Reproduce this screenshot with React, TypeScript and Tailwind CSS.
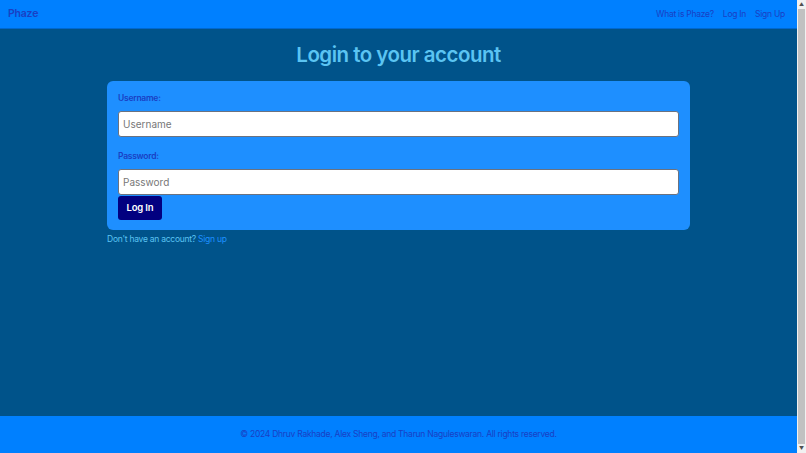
export default function App() {
  return (
    <div className="flex h-[453px] overflow-hidden font-['Inter',sans-serif]">
      <div className="flex-1 flex flex-col bg-[#00538a]">
        {/* header */}
        <header className="flex items-center justify-between h-[29px] pl-2 pr-[12px] bg-[#0080ff] border-b border-[#0068d0]">
          <span className="text-[10.5px] font-semibold text-[#1a3fc4] leading-[14px] tracking-[-0.02em]">Phaze</span>
          <nav className="flex items-center gap-[9px] text-[8.5px] text-[#1a3fc4] leading-[12px] tracking-[-0.03em]">
            <a>What is Phaze?</a>
            <a>Log In</a>
            <a>Sign Up</a>
          </nav>
        </header>

        {/* main */}
        <main className="flex-1 flex flex-col items-center">
          <h1 className="mt-[12px] text-[20.5px] leading-[28px] font-semibold text-[#5bc4f2] tracking-tight">
            Login to your account
          </h1>
          <div className="w-[583px] mt-[12px]">
            <form className="bg-[#1e8fff] rounded-[6px] px-[11px] pt-[11px] pb-[10px]">
              <label className="block text-[8.5px] leading-[12px] font-semibold tracking-[-0.03em] text-[#1a3fc4]">
                Username:
              </label>
              <input
                readOnly
                placeholder="Username"
                className="mt-[7px] block w-full h-[26px] rounded-[3px] bg-white border border-[#6b7280] px-[4px] text-[10px] placeholder:text-[#777]"
              />
              <label className="block mt-[13px] text-[8.5px] leading-[12px] font-semibold tracking-[-0.03em] text-[#1a3fc4]">
                Password:
              </label>
              <input
                readOnly
                placeholder="Password"
                className="mt-[7px] block w-full h-[26px] rounded-[3px] bg-white border border-[#6b7280] px-[4px] text-[10px] placeholder:text-[#777]"
              />
              <button
                type="button"
                className="mt-[1px] block h-[24px] w-[44px] rounded-[3px] bg-[#020080] text-white text-[9.5px] font-semibold tracking-[-0.02em]"
              >
                Log In
              </button>
            </form>
            <p className="mt-[3px] text-[8.5px] leading-[12px] tracking-[-0.03em] text-[#5bc4f2]">
              Don't have an account? <a className="text-[#1e90ff]">Sign up</a>
            </p>
          </div>
        </main>

        {/* footer */}
        <footer className="h-[37px] flex items-center justify-center bg-[#0080ff] text-[8.5px] tracking-[-0.03em] text-[#1a3fc4]">
          © 2024 Dhruv Rakhade, Alex Sheng, and Tharun Naguleswaran. All rights reserved.
        </footer>
      </div>

      {/* browser scrollbar */}
      <div className="w-[9px] flex flex-col bg-[#f1f1f1]">
        <div className="h-[9px] flex items-center justify-center text-[5px] leading-none text-[#505050]">▲</div>
        <div className="flex-1 mx-[1px] bg-[#c1c1c1]" />
        <div className="h-[9px] flex items-center justify-center text-[5px] leading-none text-[#505050]">▼</div>
      </div>
    </div>
  );
}
